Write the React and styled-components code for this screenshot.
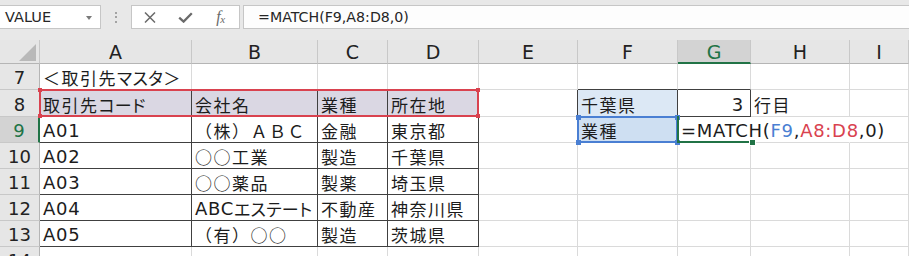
import React from 'react';
import styled, { createGlobalStyle } from 'styled-components';

const GlobalStyle = createGlobalStyle`
  html, body { margin: 0; padding: 0; background: #fff; }
  body { width: 909px; height: 256px; overflow: hidden; font-family: "DejaVu Sans", "Noto Sans CJK JP", sans-serif; }
`;

const DARK = '#404040';
const GRID = '#dadada';
const HEAD_BG = '#e6e6e6';
const HEAD_LINE = '#c8c8c8';
const GREEN = '#217346';
const RED = '#d9424f';
const BLUE = '#4a7fd3';

const Page = styled.div`
  width: 909px;
  height: 256px;
  overflow: hidden;
  display: flex;
  flex-direction: column;
  background: #fff;
`;

/* ---------- formula bar ---------- */
const TopBar = styled.div`
  height: 40px;
  flex: none;
  box-sizing: border-box;
  background: #e8e8e8;
  display: flex;
  align-items: flex-start;
  padding-top: 5px;
`;

const NameBox = styled.div`
  width: 101px;
  height: 24px;
  box-sizing: border-box;
  background: #fff;
  border: 1px solid #c6c6c6;
  border-left: none;
  display: flex;
  align-items: center;
  justify-content: space-between;
  padding: 0 8px 0 5px;
  font-family: "DejaVu Sans", sans-serif;
  font-size: 14.5px;
  color: #262626;
`;

const DropArrow = styled.span`
  width: 0;
  height: 0;
  border-left: 3.5px solid transparent;
  border-right: 3.5px solid transparent;
  border-top: 4px solid #7a7a7a;
  margin-top: 1px;
`;

const Grip = styled.div`
  width: 30px;
  height: 24px;
  display: flex;
  flex-direction: column;
  align-items: center;
  justify-content: center;
  gap: 2.5px;
`;

const GripDot = styled.span`
  width: 2px;
  height: 2px;
  background: #a3a3a3;
`;

const FxBox = styled.div`
  width: 109px;
  height: 24px;
  box-sizing: border-box;
  background: #fff;
  border: 1px solid #c6c6c6;
  display: grid;
  grid-template-columns: 36px 35px 35px;
  align-items: center;
  justify-items: center;
  color: #6a6a6a;
`;

const FxText = styled.span`
  font-family: "Liberation Serif", serif;
  font-style: italic;
  font-size: 16px;
  color: #6a6a6a;
  letter-spacing: -0.5px;
  line-height: 1;
  & sub { font-size: 11px; vertical-align: -1px; }
`;

const FormulaBox = styled.div`
  flex: 1;
  margin-left: 3px;
  height: 24px;
  box-sizing: border-box;
  background: #fdfdfd;
  border: 1px solid #c6c6c6;
  border-right: none;
  display: flex;
  align-items: center;
  padding-left: 14px;
  font-family: "DejaVu Sans", sans-serif;
  font-size: 14.2px;
  color: #262626;
`;

/* ---------- sheet ---------- */
const Sheet = styled.div`
  display: grid;
  grid-template-columns: 40px 152px 126px 70px 91px 99px 100px 73px 99px 1fr;
  grid-template-rows: 24px 26px 27px repeat(6, 26px);
  background: #fff;
`;

const Corner = styled.div`
  grid-row: 1;
  grid-column: 1;
  background: ${HEAD_BG};
  border-right: 1px solid ${HEAD_LINE};
  border-bottom: 1px solid #b5b5b5;
  box-sizing: border-box;
  display: flex;
  justify-content: flex-end;
  align-items: flex-end;
  padding: 0 3px 2px 0;
`;

const ColHead = styled.div`
  grid-row: 1;
  grid-column: ${p => p.$c};
  box-sizing: border-box;
  background: ${p => (p.$sel ? '#d3d3d3' : HEAD_BG)};
  border-right: 1px solid ${HEAD_LINE};
  border-bottom: ${p => (p.$sel ? `2px solid ${GREEN}` : '1px solid #b5b5b5')};
  display: flex;
  align-items: center;
  justify-content: center;
  padding-top: ${p => (p.$sel ? '1px' : '0')};
  font-family: "DejaVu Sans", sans-serif;
  font-size: 19px;
  color: ${p => (p.$sel ? GREEN : '#222')};
`;

const RowHead = styled.div`
  grid-row: ${p => p.$r};
  grid-column: 1;
  box-sizing: border-box;
  background: ${p => (p.$sel ? '#d3d3d3' : HEAD_BG)};
  border-right: ${p => (p.$sel ? `2px solid ${GREEN}` : `1px solid #b5b5b5`)};
  border-bottom: 1px solid ${HEAD_LINE};
  display: flex;
  align-items: center;
  justify-content: center;
  padding-top: 2px;
  font-family: "DejaVu Sans", sans-serif;
  font-size: 18px;
  color: ${p => (p.$sel ? GREEN : '#222')};
`;

const Cell = styled.div`
  grid-row: ${p => p.$r};
  grid-column: ${p => p.$c};
  box-sizing: border-box;
  min-width: 0;
  border-right: 1px solid ${p => p.$rb || GRID};
  border-bottom: 1px solid ${p => p.$bb || GRID};
  background: ${p => p.$bg || 'transparent'};
  display: flex;
  align-items: center;
  justify-content: ${p => (p.$right ? 'flex-end' : 'flex-start')};
  padding: 3px ${p => (p.$right ? '6px' : '0')} 0 3px;
  overflow: ${p => (p.$spill ? 'visible' : 'hidden')};
  white-space: nowrap;
  position: relative;
  z-index: ${p => (p.$spill ? 2 : 0)};
  font-family: "Noto Sans CJK JP", sans-serif;
  font-size: 17px;
  letter-spacing: 1.5px;
  line-height: 20px;
  color: #1c1c1c;
`;

const Lat = styled.span`
  font-family: "DejaVu Sans", sans-serif;
  font-size: 18px;
  letter-spacing: 0.7px;
  color: ${p => p.$color || 'inherit'};
`;

const Kana = styled.span`
  font-feature-settings: "palt";
  letter-spacing: 0.3px;
`;

const RangeBox = styled.div`
  grid-row: ${p => p.$r};
  grid-column: ${p => p.$c};
  margin: -1px 0 0 -1px;
  box-sizing: border-box;
  border: 2px solid ${p => p.$color};
  position: relative;
  z-index: 3;
  pointer-events: none;
`;

const ActiveBox = styled.div`
  grid-row: ${p => p.$r};
  grid-column: ${p => p.$c};
  margin: -1px 0 0 -1px;
  box-sizing: border-box;
  border-left: 2px solid ${GREEN};
  border-bottom: 2px solid ${GREEN};
  position: relative;
  z-index: 4;
  pointer-events: none;
`;

const Handle = styled.span`
  position: absolute;
  width: ${p => p.$size}px;
  height: ${p => p.$size}px;
  background: ${p => p.$color};
  box-shadow: 0 0 0 ${p => (p.$ring ? 1 : 0)}px #fff;
  ${p => (p.$top ? `top: ${-2 - p.$size / 2 + 1}px;` : `bottom: ${-2 - p.$size / 2 + 1}px;`)}
  ${p => (p.$left ? `left: ${-2 - p.$size / 2 + 1}px;` : `right: ${-p.$size / 2 - 1}px;`)}
`;

/* ---------- data ---------- */
const COLS = ['A', 'B', 'C', 'D', 'E', 'F', 'G', 'H', 'I'];
const ROWS = [7, 8, 9, 10, 11, 12, 13, 14];

const data = {
  7: { A: '＜取引先マスタ＞' },
  8: { A: '取引先コード', B: '会社名', C: '業種', D: '所在地', F: '千葉県', G: '3', H: '行目' },
  9: { A: 'A01', B: '（株）ＡＢＣ', C: '金融', D: '東京都', F: '業種' },
  10: { A: 'A02', B: '○○工業', C: '製造', D: '千葉県' },
  11: { A: 'A03', B: '○○薬品', C: '製薬', D: '埼玉県' },
  12: { A: 'A04', B: 'ABCエステート', C: '不動産', D: '神奈川県' },
  13: { A: 'A05', B: '（有）○○', C: '製造', D: '茨城県' },
  14: {},
};

function Txt({ text }) {
  const parts = text.match(/[\x20-\x7e]+|[\u30a0-\u30ff]+|[^\x20-\x7e\u30a0-\u30ff]+/g) || [];
  return parts.map((p, i) => {
    if (/^[\x20-\x7e]/.test(p)) return <Lat key={i}>{p}</Lat>;
    if (/^[\u30a0-\u30ff]/.test(p)) return <Kana key={i}>{p}</Kana>;
    return <React.Fragment key={i}>{p}</React.Fragment>;
  });
}

function cellProps(r, c) {
  const ci = COLS.indexOf(c);
  const p = {};
  const inTable = r >= 8 && r <= 13 && ci <= 3;
  if (inTable) { p.$rb = DARK; p.$bb = DARK; }
  if (r === 7 && ci <= 3) p.$bb = DARK;
  if (r === 8 && ci <= 3) p.$bg = '#dad7e3';
  const inBox = (r === 8 || r === 9) && (c === 'F' || c === 'G');
  if (inBox) { p.$rb = DARK; p.$bb = DARK; }
  if ((r === 8 || r === 9) && c === 'E') p.$rb = DARK;
  if (r === 7 && (c === 'F' || c === 'G')) p.$bb = DARK;
  if (r === 8 && c === 'F') p.$bg = '#dce8f5';
  if (r === 9 && c === 'F') p.$bg = '#cedff2';
  if (r === 8 && c === 'G') p.$right = true;
  if (r === 9 && (c === 'G' || c === 'H')) p.$rb = 'transparent';
  return p;
}

const Check = () => (
  <svg width="15" height="11" viewBox="0 0 15 11">
    <path d="M1.2 5.6 L5.6 9.6 L13.8 1.2" fill="none" stroke="#6a6a6a" strokeWidth="2.3" />
  </svg>
);

const Cross = () => (
  <svg width="12" height="11" viewBox="0 0 12 11">
    <path d="M1 0.5 L11 10.5 M11 0.5 L1 10.5" fill="none" stroke="#6a6a6a" strokeWidth="1.5" />
  </svg>
);

export default function App() {
  return (
    <Page>
      <GlobalStyle />
      <TopBar>
        <NameBox>
          <span>VALUE</span>
          <DropArrow />
        </NameBox>
        <Grip>
          <GripDot />
          <GripDot />
          <GripDot />
        </Grip>
        <FxBox>
          <Cross />
          <Check />
          <FxText>f<sub>x</sub></FxText>
        </FxBox>
        <FormulaBox>=MATCH(F9,A8:D8,0)</FormulaBox>
      </TopBar>

      <Sheet>
        <Corner>
          <svg width="17" height="17" viewBox="0 0 17 17">
            <polygon points="17,0 17,17 0,17" fill="#b9b9b9" />
          </svg>
        </Corner>
        {COLS.map((c, i) => (
          <ColHead key={c} $c={i + 2} $sel={c === 'G'}>{c}</ColHead>
        ))}
        {ROWS.map((r, ri) => (
          <React.Fragment key={r}>
            <RowHead $r={ri + 2} $sel={r === 9}>{r}</RowHead>
            {COLS.map((c, ci) => {
              const txt = data[r][c];
              const props = cellProps(r, c);
              if (r === 9 && c === 'G') {
                return (
                  <Cell key={c} $r={ri + 2} $c={ci + 2} {...props} $spill>
                    <Lat>=MATCH(</Lat>
                    <Lat $color={BLUE}>F9</Lat>
                    <Lat>,</Lat>
                    <Lat $color={RED}>A8:D8</Lat>
                    <Lat>,0)</Lat>
                  </Cell>
                );
              }
              return (
                <Cell key={c} $r={ri + 2} $c={ci + 2} {...props}>
                  {txt ? <Txt text={txt} /> : null}
                </Cell>
              );
            })}
          </React.Fragment>
        ))}

        <RangeBox $r={3} $c="2 / 6" $color={RED}>
          <Handle $color={RED} $size={4} $top $left />
          <Handle $color={RED} $size={4} $top />
          <Handle $color={RED} $size={4} $left />
          <Handle $color={RED} $size={4} />
        </RangeBox>
        <RangeBox $r={4} $c={7} $color={BLUE}>
          <Handle $color={BLUE} $size={5} $top $left />
          <Handle $color={BLUE} $size={5} $top />
          <Handle $color={BLUE} $size={5} $left />
          <Handle $color={BLUE} $size={5} />
        </RangeBox>
        <ActiveBox $r={4} $c={8}>
          <Handle $color={GREEN} $size={5} $ring />
        </ActiveBox>
      </Sheet>
    </Page>
  );
}
